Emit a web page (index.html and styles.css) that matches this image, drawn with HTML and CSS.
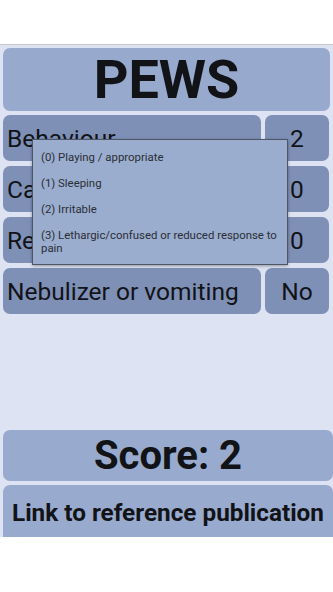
FILE: index.html
```html
<!DOCTYPE html>
<html>
<head>
<meta charset="utf-8">
<link rel="stylesheet" href="styles.css">
</head>
<body>
<div class="status"></div>
<div class="app">
  <div class="title">PEWS</div>
  <div class="row">
    <div class="label">Behaviour</div>
    <div class="value">2</div>
  </div>
  <div class="row">
    <div class="label">Cardiovascular</div>
    <div class="value">0</div>
  </div>
  <div class="row">
    <div class="label">Respiratory</div>
    <div class="value">0</div>
  </div>
  <div class="row">
    <div class="label">Nebulizer or vomiting</div>
    <div class="value">No</div>
  </div>
  <div class="spacer"></div>
  <div class="score">Score: 2</div>
  <div class="link">Link to reference publication</div>
  <div class="popup">
    <div class="item">(0) Playing / appropriate</div>
    <div class="item">(1) Sleeping</div>
    <div class="item">(2) Irritable</div>
    <div class="item">(3) Lethargic/confused or reduced response to pain</div>
  </div>
</div>
</body>
</html>
```
FILE: styles.css
```css
html, body {
  margin: 0;
  padding: 0;
  background: #ffffff;
  font-family: Roboto, "Noto Sans", sans-serif;
  color: #111317;
}
.status {
  height: 44px;
  background: #ffffff;
  border-bottom: 1px solid #c9c9c9;
}
.app {
  position: relative;
  height: 492px;
  overflow: hidden;
  background: #dde3f2;
  padding: 3px 0 0 3px;
  box-sizing: border-box;
  display: flex;
  flex-direction: column;
}
.title {
  height: 63px;
  margin-right: 3px;
  background: #97a9cd;
  border-radius: 7px;
  display: flex;
  align-items: center;
  justify-content: center;
  font-weight: 700;
  font-size: 54px;
  flex-shrink: 0;
}
.row {
  display: flex;
  gap: 4px;
  height: 46px;
  margin-right: 4px;
  margin-top: 5px;
  flex-shrink: 0;
}
.title + .row {
  margin-top: 4px;
}
.label, .value {
  background: #7f90b7;
  border-radius: 7px;
  display: flex;
  align-items: center;
  font-size: 24.5px;
  white-space: nowrap;
  overflow: hidden;
}
.label {
  flex: 1;
  padding-left: 4px;
}
.value {
  width: 64px;
  justify-content: center;
}
.spacer {
  flex: 1;
}
.score {
  flex-shrink: 0;
  height: 51px;
  background: #98aacd;
  border-radius: 7px;
  display: flex;
  align-items: center;
  justify-content: center;
  font-weight: 700;
  font-size: 40px;
}
.link {
  flex-shrink: 0;
  height: 60px;
  margin-top: 4px;
  margin-bottom: -8px;
  background: #98aacd;
  border-radius: 7px;
  padding-top: 13px;
  box-sizing: border-box;
  text-align: center;
  font-weight: 700;
  font-size: 24.3px;
  white-space: nowrap;
}
.popup {
  position: absolute;
  left: 32px;
  top: 94px;
  width: 254px;
  background: #9badce;
  border: 1px solid #4f5666;
  box-shadow: 0 1px 3px rgba(0,0,0,0.35);
  padding: 4px 0 3px 0;
}
.item {
  padding: 6.5px 9px 6.5px 8px;
  font-size: 11.4px;
  line-height: 13px;
  color: #2a2e36;
}
```
